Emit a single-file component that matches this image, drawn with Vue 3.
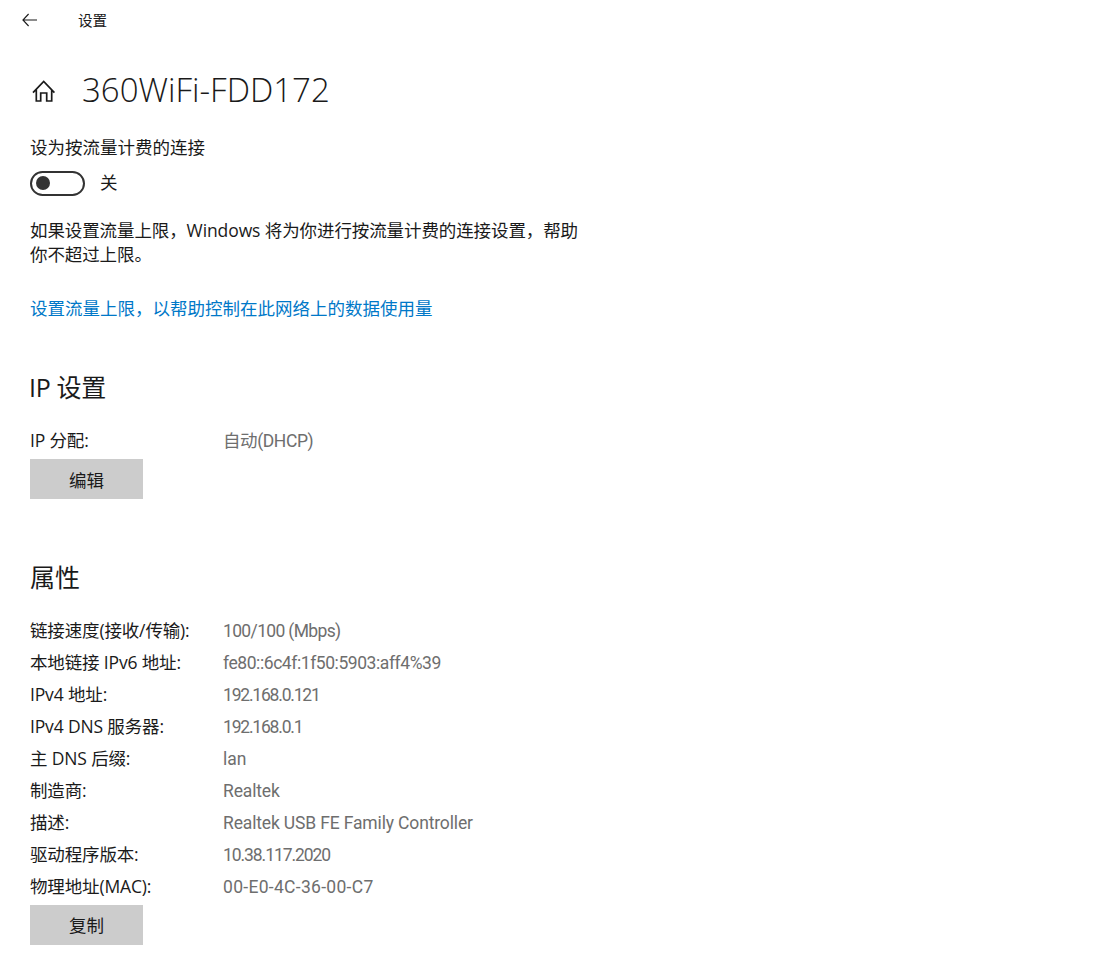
<script setup>
const props = [
  { key: '链接速度(接收/传输):', val: '100/100 (Mbps)', track: -0.65 },
  { key: '本地链接 IPv6 地址:', val: 'fe80::6c4f:1f50:5903:aff4%39', track: -0.43 },
  { key: 'IPv4 地址:', val: '192.168.0.121', track: -1.2 },
  { key: 'IPv4 DNS 服务器:', val: '192.168.0.1', track: -1.2 },
  { key: '主 DNS 后缀:', val: 'lan', track: 0 },
  { key: '制造商:', val: 'Realtek', track: -0.15 },
  { key: '描述:', val: 'Realtek USB FE Family Controller', track: -0.15 },
  { key: '驱动程序版本:', val: '10.38.117.2020', track: -1.07 },
  { key: '物理地址(MAC):', val: '00-E0-4C-36-00-C7', track: 0.3 },
]
</script>

<template>
  <div class="page">
    <header class="topbar">
      <svg class="back" width="16" height="16" viewBox="0 0 16 16" fill="none" stroke="#1a1a1a" stroke-width="1.1">
        <path d="M0.6 8H15M6.6 2L0.9 8L6.6 14" />
      </svg>
      <span class="apptitle">设置</span>
    </header>

    <main class="content">
      <div class="titlerow">
        <svg class="home" width="26" height="26" viewBox="0 0 26 26" fill="none" stroke="#1a1a1a" stroke-width="1.7">
          <path d="M3 15.7L13.7 4.5L24.4 15.7M6.3 12.5V24H10.7V16H16.7V24H21.7V12.5" />
        </svg>
        <h1>360WiFi-FDD172</h1>
      </div>

      <div class="metered">设为按流量计费的连接</div>
      <div class="togglerow">
        <span class="toggle"><span class="knob"></span></span>
        <span class="togglelabel">关</span>
      </div>

      <p class="desc">如果设置流量上限，Windows 将为你进行按流量计费的连接设置，帮助你不超过上限。</p>
      <a class="link">设置流量上限，以帮助控制在此网络上的数据使用量</a>

      <h2 class="ip-head">IP 设置</h2>
      <div class="row first"><span class="key">IP 分配:</span><span class="val dhcp">自动(DHCP)</span></div>
      <button class="btn edit">编辑</button>

      <h2 class="prop-head">属性</h2>
      <div class="props">
        <div v-for="p in props" :key="p.key" class="row">
          <span class="key">{{ p.key }}</span>
          <span class="val" :style="{ letterSpacing: p.track + 'px' }">{{ p.val }}</span>
        </div>
      </div>
      <button class="btn copy">复制</button>
    </main>
  </div>
</template>

<style>
html, body { margin: 0; background: #fff; }
</style>

<style scoped>
.page {
  width: 1107px;
  height: 977px;
  overflow: hidden;
  background: #fff;
  color: #1a1a1a;
  font-family: "Open Sans", "Noto Sans CJK SC", sans-serif;
  font-size: 17.5px;
}
.topbar { display: flex; align-items: center; height: 39px; padding-left: 22px; }
.back { flex: none; }
.apptitle { margin-left: 40px; font-size: 14.6px; }
.content { padding-left: 30px; }
.titlerow { display: flex; align-items: center; height: 40px; margin-top: 31px; }
.home { flex: none; margin-right: 26px; }
h1 { margin: 0; font-size: 33px; font-weight: 300; line-height: 40px; white-space: nowrap; }
.metered { margin-top: 25px; height: 24px; line-height: 24px; }
.togglerow { display: flex; align-items: center; margin-top: 11px; height: 26px; }
.toggle { display: flex; align-items: center; box-sizing: border-box; width: 55px; height: 25px; border: 2.5px solid #333; border-radius: 13px; padding-left: 4px; }
.knob { width: 14px; height: 14px; border-radius: 50%; background: #333; }
.togglelabel { margin-left: 15px; line-height: 24px; height: 26px; }
.desc { margin: 22px 0 0; width: 552px; line-height: 24px; letter-spacing: -0.1px; }
.link { display: block; margin-top: 29px; height: 26px; line-height: 26px; color: #0078c8; }
h2 { margin: 0; font-weight: 400; font-size: 25px; line-height: 32px; }
.ip-head { margin-top: 50px; margin-left: -1px; letter-spacing: -0.3px; }
.row { display: flex; height: 32px; line-height: 32px; white-space: nowrap; }
.row.first { margin-top: 22px; height: 34px; }
.key { width: 193px; flex: none; letter-spacing: -0.15px; line-height: 30px; }
.val { color: #6e6e6e; font-family: Roboto, "Noto Sans CJK SC", sans-serif; }
.val.dhcp { letter-spacing: -0.4px; }
.btn { display: block; width: 113px; height: 40px; border: 0; padding: 0; background: #ccc; color: #1a1a1a; font: inherit; }
.btn.copy { margin-top: 2px; padding-bottom: 1px; }
.prop-head { margin-top: 62px; }
.props { margin-top: 22px; }
</style>
